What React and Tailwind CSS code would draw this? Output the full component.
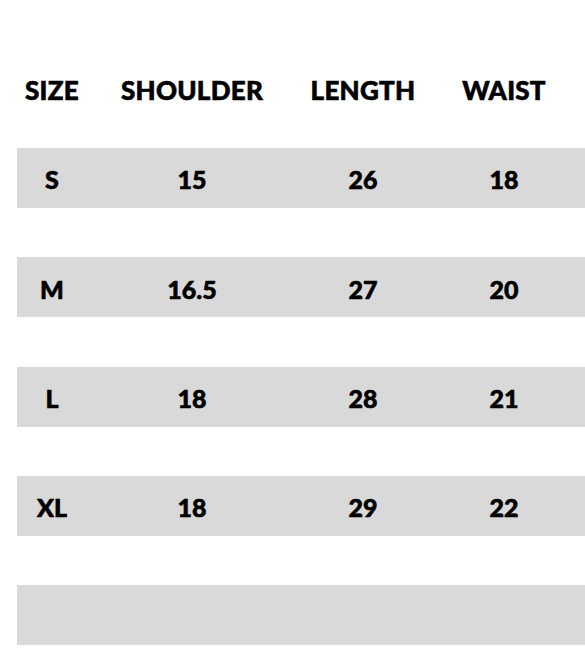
const header = ['SIZE', 'SHOULDER', 'LENGTH', 'WAIST'];

const rows = [
  ['S', '15', '26', '18'],
  ['M', '16.5', '27', '20'],
  ['L', '18', '28', '21'],
  ['XL', '18', '29', '22'],
  ['', '', '', ''],
];

// column centres sit at x = 52, 192, 363, 504 (measured from the page edge)
const cols = 'grid grid-cols-[70px_210px_132px_150px_1fr] items-center';

export default function App() {
  return (
    <div
      className="w-[585px] h-[651px] bg-white text-black overflow-hidden pt-[60px] [-webkit-text-stroke:0.6px_black]"
      style={{ fontFamily: 'Lato, "Liberation Sans", sans-serif' }}
    >
      {/* header */}
      <div className={`${cols} h-[60px] pl-[17px] text-[26px] font-black tracking-[0.01em]`}>
        {header.map((h) => (
          <div key={h} className="text-center">{h}</div>
        ))}
        <div />
      </div>

      {/* size rows */}
      <div className="mt-[28px] flex flex-col gap-[49.25px]">
        {rows.map((r, i) => (
          <div key={i} className={`${cols} ml-[17px] h-[60px] bg-[#d9d9d9] text-[25px] font-black pt-[4px]`}>
            {r.map((v, j) => (
              <div key={j} className="text-center">{v}</div>
            ))}
            <div />
          </div>
        ))}
      </div>
    </div>
  );
}
